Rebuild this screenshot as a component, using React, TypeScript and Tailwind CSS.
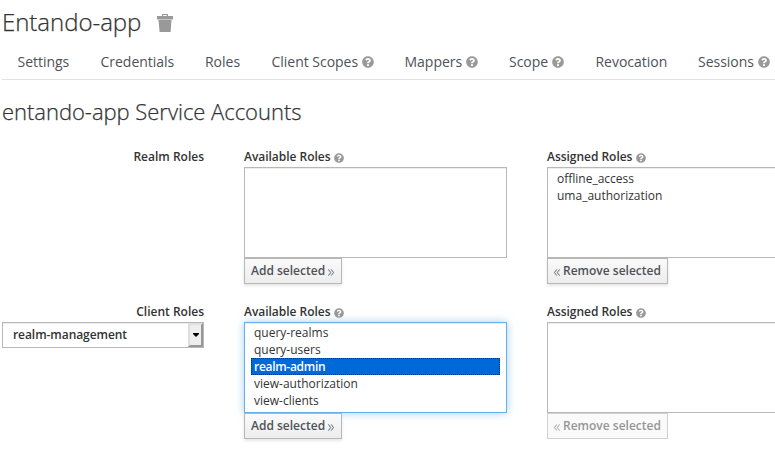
import React from "react";
import { FaQuestionCircle } from "react-icons/fa";

const tabs = [
  { label: "Settings", width: "w-[83px]" },
  { label: "Credentials", width: "w-[104.5px]" },
  { label: "Roles", width: "w-[66.5px]" },
  { label: "Client Scopes", width: "w-[133px]", help: true },
  { label: "Mappers", width: "w-[104.5px]", help: true },
  { label: "Scope", width: "w-[86.5px]", help: true },
  { label: "Revocation", width: "w-[102.5px]" },
  { label: "Sessions", width: "w-[90px]", help: true },
];

function TrashIcon() {
  return (
    <svg className="mt-[14px] ml-4 block h-[18px] w-4" viewBox="0 0 16 18" fill="#999999">
      <path d="M5 2V0h6v2h5v3H0V2zM6.2 1.1V2h3.6v-.9z" fillRule="evenodd" />
      <path d="M0 5h16v1H0z" fill="#c8c8c8" />
      <path d="M1.5 6h13L13.6 18H2.6z" />
    </svg>
  );
}

function Chevrons({ left = false }: { left?: boolean }) {
  return (
    <svg
      className={left ? "mt-[3px] mr-[3px] h-[7px] w-[6px] shrink-0 rotate-180" : "mt-[3px] ml-[3px] h-[7px] w-[6px] shrink-0"}
      viewBox="0 0 6 7"
      fill="none"
      stroke="currentColor"
      strokeWidth="0.9"
    >
      <path d="M.4.4 2.7 3.5.4 6.6M3.2.4l2.3 3.1-2.3 3.1" />
    </svg>
  );
}

function RoleList({ title, options, selected, focused, wide, action, disabled }: {
  title: string; options: string[]; selected?: string; focused?: boolean; wide?: boolean; action: "add" | "remove"; disabled?: boolean;
}) {
  return (
    <div className={wide ? "w-[300px] shrink-0" : "w-[263px] shrink-0"}>
      <div className="flex h-[18px] items-start text-xs leading-4 font-semibold tracking-[-0.03px] text-[#333]">
        {title}
        <FaQuestionCircle className="mt-[3.5px] ml-1 text-[10px] text-[#999]" />
      </div>
      <div
        className={
          focused
            ? "h-[91px] border border-[#66afe9] px-[6px] pt-px shadow-[inset_0_1px_1px_rgba(0,0,0,0.075),0_0_8px_rgba(102,175,233,0.6)]"
            : "h-[91px] border border-[#b8b8b8] px-[6px] pt-[2px] shadow-[inset_0_1px_1px_rgba(0,0,0,0.075)]"
        }
      >
        {options.map((o) => (
          <div
            key={o}
            className={
              o === selected
                ? "h-[17px] border border-dotted border-[#002f80] bg-[#0069d9] px-[2px] text-xs leading-[15px] font-semibold tracking-[-0.3px] text-white"
                : "h-[17px] px-[3px] text-xs leading-[17px] text-[#333]"
            }
          >
            {o}
          </div>
        ))}
      </div>
      <button
        type="button"
        disabled={disabled}
        className={
          "flex h-[26px] items-center border pb-px pl-[6px] text-xs font-semibold whitespace-nowrap " +
          (action === "add" ? "w-[98px] " : "w-[121px] ") +
          (disabled
            ? "border-[#d1d1d1] bg-[#fafafa] text-[#969696]"
            : "border-[#b7b7b7] bg-linear-to-b from-[#fafafa] to-[#ededed] text-[#4d5258] shadow-[0_2px_3px_rgba(3,3,3,0.1)]")
        }
      >
        {action === "remove" && <Chevrons left />}
        {action === "add" ? "Add selected" : "Remove selected"}
        {action === "add" && <Chevrons />}
      </button>
    </div>
  );
}

function ClientSelect() {
  return (
    <div className="mt-[2px] flex h-[26px] w-[202px] border border-[#b8b8b8] bg-white shadow-[inset_0_1px_1px_rgba(0,0,0,0.075)]">
      <span className="flex-1 pl-[10px] text-xs leading-[23px] font-semibold tracking-[-0.06px] text-[#333]">realm-management</span>
      <span className="flex w-[15px] items-center justify-center border-2 border-t-[#e0e0e0] border-r-[#979797] border-b-[#979797] border-l-[#dedede] bg-[#eee]">
        <svg className="h-1 w-[6px]" viewBox="0 0 6 4"><path d="M0 0h6v1L3 4 0 1z" /></svg>
      </span>
    </div>
  );
}

export default function App() {
  return (
    <main className="h-[470px] w-[775px] overflow-hidden bg-white pl-[2px] font-['Open_Sans',sans-serif] text-[#333]">
      <header className="flex h-[43px]">
        <h1 className="mt-[6px] w-[139px] text-2xl leading-8 font-light tracking-[-0.03px] whitespace-nowrap [-webkit-text-stroke:0.25px_#333]">Entando-app</h1>
        <TrashIcon />
      </header>
      <nav className="flex h-[37px] border-b border-[#e2e2e2] pl-[15.5px]">
        {tabs.map((t) => (
          <a key={t.label} className={"flex shrink-0 items-start pt-2 text-sm leading-[22px] tracking-[-0.02px] whitespace-nowrap text-[#4d5258] " + t.width}>
            {t.label}
            {t.help && <FaQuestionCircle className="mt-[5px] ml-1 text-xs text-[#999]" />}
          </a>
        ))}
      </nav>
      <h2 className="mt-[15px] h-[54px] text-[22px] leading-8 font-light tracking-[-0.03px] [-webkit-text-stroke:0.25px_#333]">entando-app Service Accounts</h2>
      <section className="flex h-[155px]">
        <div className="w-[202px] shrink-0 text-right text-xs leading-4 font-semibold">Realm Roles</div>
        <div className="ml-10 flex gap-10">
          <RoleList title="Available Roles" options={[]} action="add" />
          <RoleList title="Assigned Roles" options={["offline_access", "uma_authorization"]} wide action="remove" />
        </div>
      </section>
      <section className="flex">
        <div className="w-[202px] shrink-0">
          <div className="text-right text-xs leading-4 font-semibold">Client Roles</div>
          <ClientSelect />
        </div>
        <div className="ml-10 flex gap-10">
          <RoleList
            title="Available Roles"
            options={["query-realms", "query-users", "realm-admin", "view-authorization", "view-clients"]}
            selected="realm-admin"
            focused
            action="add"
          />
          <RoleList title="Assigned Roles" options={[]} wide action="remove" disabled />
        </div>
      </section>
    </main>
  );
}
